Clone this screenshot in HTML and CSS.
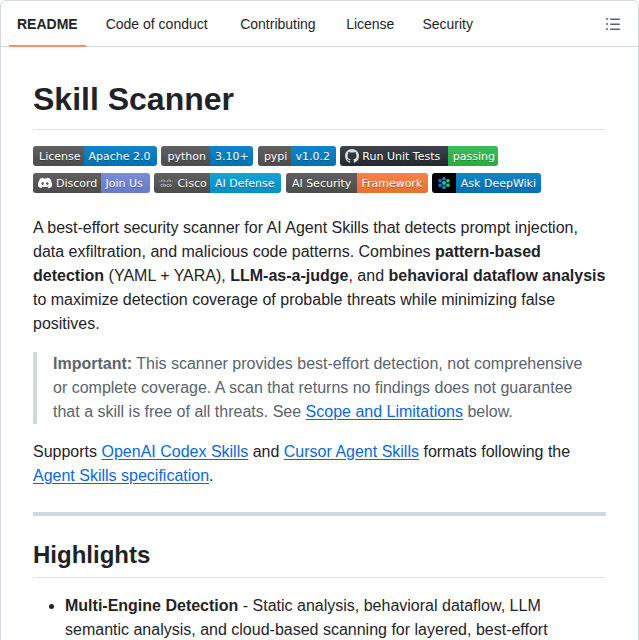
FILE: index.html
```html
<!DOCTYPE html>
<html lang="en">
<head>
<meta charset="utf-8">
<title>Skill Scanner</title>
<link rel="stylesheet" href="styles.css">
</head>
<body>
<div class="box">
  <nav class="tabs">
    <a class="tab active">README</a>
    <a class="tab t2">Code of conduct</a>
    <a class="tab t3">Contributing</a>
    <a class="tab t4">License</a>
    <a class="tab t5">Security</a>
    <svg class="toc" width="16" height="16" viewBox="0 0 16 16" fill="#59636e"><path d="M5.75 2.5h8.5a.75.75 0 0 1 0 1.5h-8.5a.75.75 0 0 1 0-1.5Zm0 5h8.5a.75.75 0 0 1 0 1.5h-8.5a.75.75 0 0 1 0-1.5Zm0 5h8.5a.75.75 0 0 1 0 1.5h-8.5a.75.75 0 0 1 0-1.5ZM2 14a1 1 0 1 1 0-2 1 1 0 0 1 0 2Zm1-6a1 1 0 1 1-2 0 1 1 0 0 1 2 0ZM2 4a1 1 0 1 1 0-2 1 1 0 0 1 0 2Z"/></svg>
  </nav>
  <article class="md">
    <h1>Skill Scanner</h1>
    <div class="badges">
      <div class="row">
        <span class="badge"><span class="l w51">License</span><span class="r blue w73">Apache 2.0</span></span>
        <span class="badge"><span class="l w49">python</span><span class="r blue w43">3.10+</span></span>
        <span class="badge"><span class="l w33">pypi</span><span class="r blue w45">v1.0.2</span></span>
        <span class="badge"><span class="l dark w108"><svg class="ico gh" width="14" height="14" viewBox="0 0 16 16" fill="#d8dadc"><path d="M8 0C3.58 0 0 3.58 0 8c0 3.54 2.29 6.53 5.47 7.59.4.07.55-.17.55-.38 0-.19-.01-.82-.01-1.49-2.01.37-2.53-.49-2.69-.94-.09-.23-.48-.94-.82-1.13-.28-.15-.68-.52-.01-.53.63-.01 1.08.58 1.23.82.72 1.21 1.87.87 2.33.66.07-.52.28-.87.51-1.07-1.78-.2-3.64-.89-3.64-3.95 0-.87.31-1.59.82-2.15-.08-.2-.36-1.02.08-2.12 0 0 .67-.21 2.2.82.64-.18 1.32-.27 2-.27.68 0 1.36.09 2 .27 1.53-1.04 2.2-.82 2.2-.82.44 1.1.16 1.92.08 2.12.51.56.82 1.27.82 2.15 0 3.07-1.87 3.75-3.65 3.95.29.25.54.73.54 1.48 0 1.07-.01 1.93-.01 2.2 0 .21.15.46.55.38A8.01 8.01 0 0 0 16 8c0-4.42-3.58-8-8-8Z"/></svg>Run Unit Tests</span><span class="r green w50">passing</span></span>
      </div>
      <div class="row">
        <span class="badge"><span class="l with-ico w68"><svg class="ico" width="14" height="14" viewBox="0 0 24 24" fill="#fff"><path d="M20.3 4.400A19.800 19.800 0 0 0 15.400 3l-.6 1.300a18.300 18.300 0 0 0-5.500 0L8.600 3a19.700 19.700 0 0 0-4.900 1.500C.5 9.100-.3 13.600.1 18.100a19.900 19.900 0 0 0 6 3l1.300-2.100-2-1 .5-.4a14.200 14.200 0 0 0 12.200 0l.5.4-2 1 1.300 2.100a19.800 19.800 0 0 0 6-3c.5-5.200-.8-9.700-3.600-13.700ZM8 15.400c-1.200 0-2.200-1.100-2.200-2.400s1-2.400 2.200-2.400 2.200 1.100 2.200 2.400-1 2.400-2.200 2.400Zm8 0c-1.200 0-2.200-1.100-2.200-2.400s1-2.400 2.200-2.400 2.200 1.100 2.200 2.400-1 2.400-2.200 2.400Z"/></svg>Discord</span><span class="r purple w49">Join Us</span></span>
        <span class="badge"><span class="l with-ico w56"><svg class="ico" width="14" height="14" viewBox="0 0 14 14" fill="none" stroke="#c8c8c8" stroke-width=".7"><path d="M.8 4.800v1M2.400 4v1.800M4 2.900v2.900M5.600 4v1.800M7 4.800v1M8.400 4v1.800M10 2.900v2.900M11.600 4v1.800M13.200 4.800v1"/><text class="cisco-word" x="7" y="10.800" text-anchor="middle">cisco</text></svg>Cisco</span><span class="r cyan w71">AI Defense</span></span>
        <span class="badge"><span class="l w71">AI Security</span><span class="r orange w71">Framework</span></span>
        <span class="badge"><span class="l black w24"><svg class="ico" width="14" height="14" viewBox="0 0 14 14"><path d="M3 4.500 7 2.500 11 4.800 11 9.200 7 11.500 3 9.500ZM3 4.500 7 7 3 9.500M7 2.500V11.500M7 7 11 4.800M7 7 11 9.200" fill="none" stroke="#167a8a" stroke-width=".8"/><circle cx="3" cy="4.500" r="1.800" fill="#2168d8"/><circle cx="3" cy="9.500" r="1.800" fill="#2168d8"/><circle cx="7" cy="2.500" r="1.700" fill="#1a86b8"/><circle cx="7" cy="7" r="2" fill="#1fc0a0"/><circle cx="7" cy="11.500" r="1.700" fill="#1a86b8"/><circle cx="11" cy="4.800" r="1.800" fill="#1fc68f"/><circle cx="11" cy="9.200" r="1.800" fill="#1fc68f"/></svg></span><span class="r blue w85">Ask DeepWiki</span></span>
      </div>
    </div>
    <p>A best-effort security scanner for AI Agent Skills that detects prompt injection, data exfiltration, and malicious code patterns. Combines <strong>pattern-based detection</strong> (YAML + YARA), <strong>LLM-as-a-judge</strong>, and <strong>behavioral dataflow analysis</strong> to maximize detection coverage of probable threats while minimizing false positives.</p>
    <blockquote><strong>Important:</strong> This scanner provides best-effort detection, not comprehensive or complete coverage. A scan that returns no findings does not guarantee that a skill is free of all threats. See <a>Scope and Limitations</a> below.</blockquote>
    <p>Supports <a>OpenAI Codex Skills</a> and <a>Cursor Agent Skills</a> formats following the <a>Agent Skills specification</a>.</p>
    <hr>
    <h2>Highlights</h2>
    <ul>
      <li><strong>Multi-Engine Detection</strong> - Static analysis, behavioral dataflow, LLM semantic analysis, and cloud-based scanning for layered, best-effort</li>
    </ul>
  </article>
</div>
</body>
</html>
```
FILE: styles.css
```css
* { box-sizing: border-box; }
html, body { margin: 0; height: 640px; overflow: hidden; background: #fff; }
body { font-family: "Liberation Sans", Arial, sans-serif; color: #1f2328; font-size: 16px; line-height: 24px; }
.box { border: 1px solid #d1d9e0; border-radius: 6px; margin: 0; width: 639px; height: 700px; }
.tabs { display: flex; align-items: center; height: 46px; border-bottom: 1px solid #d1d9e0; padding: 0 8px; font-size: 14px; position: relative; }
.tab { color: #1f2328; line-height: 20px; padding: 0 8px; height: 45px; display: flex; align-items: center; text-decoration: none; }
.tab.active { font-weight: 700; box-shadow: inset 0 -2px 0 #fd8c73; height: 46px; margin-bottom: -1px; }
.t2 { margin-left: 12px; }
.t3 { margin-left: 16.5px; }
.t4 { margin-left: 14.5px; }
.t5 { margin-left: 12px; }
.toc { margin-left: auto; margin-right: 9px; }
.md { padding: 32px; }
h1 { font-size: 32px; line-height: 40px; margin: 0 0 16px; padding-bottom: 10px; border-bottom: 1px solid #d1d9e0b3; font-weight: 600; }
.badges { display: flex; flex-direction: column; gap: 7px; margin-bottom: 23px; }
.row { display: flex; gap: 4.45px; height: 20px; }
.badge { display: inline-flex; height: 20px; border-radius: 3px; overflow: hidden; font-family: "DejaVu Sans", Verdana, sans-serif; font-size: 11px; line-height: 21px; color: #fff; white-space: nowrap; }
.l { background: #555 linear-gradient(#bbbbbb1a, #0000001a); padding-left: 6px; display: inline-flex; align-items: center; text-shadow: 0 1px 0 #0000004d; }
.with-ico { padding-left: 5px; }
.r { padding-left: 4.5px; text-shadow: 0 1px 0 #0000004d; background-image: linear-gradient(#bbbbbb1a, #0000001a); }
.ico { margin-right: 4px; flex: none; }
.gh { margin-right: 3px; }
.cisco-word { font-family: "Liberation Sans", Arial, sans-serif; font-size: 4.5px; font-weight: 700; fill: #c8c8c8; stroke: none; }
.dark { background: linear-gradient(#3d444d, #24292e); padding-left: 5px; }
.black { background: #000; padding-left: 5px; }
.black .ico { margin-right: 0; }
.w24 { width: 24px; }
.w33 { width: 33px; }
.w43 { width: 43px; }
.w45 { width: 45px; }
.w49 { width: 49px; }
.w50 { width: 50px; }
.w51 { width: 51px; }
.w56 { width: 56px; }
.w68 { width: 68px; }
.w71 { width: 71px; }
.w73 { width: 73px; }
.w85 { width: 85px; }
.w108 { width: 108px; }
.blue { background-color: #007ec6; }
.green { background-color: #2ebd4b; }
.purple { background-color: #7289da; }
.cyan { background-color: #049fd9; }
.orange { background-color: #fe7d37; }
p { margin: 0 0 16px; }
blockquote { margin: 0 0 16px; padding: 0 16px; border-left: 4px solid #d1d9e0; color: #59636e; }
a { color: #0969da; text-decoration: underline; text-underline-offset: 2px; }
hr { height: 4px; margin: 24px 0; background: #d1d9e0; border: 0; }
h2 { font-size: 24px; line-height: 30px; margin: 24px 0 16px; padding-bottom: 7px; border-bottom: 1px solid #d1d9e0b3; font-weight: 600; }
ul { margin: 0; padding-left: 32px; }
li { margin: 0; }
```
